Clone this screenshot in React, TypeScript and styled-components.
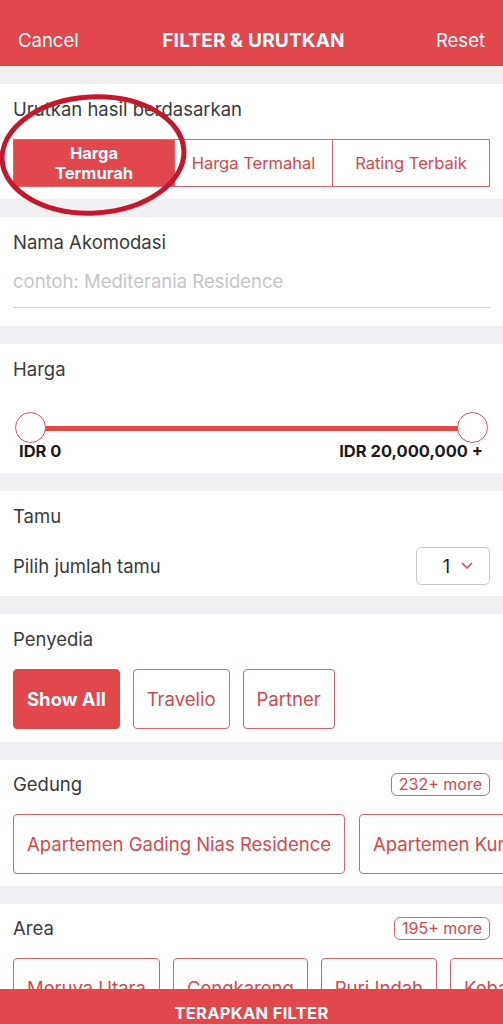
import * as React from "react";
import styled, { createGlobalStyle } from "styled-components";

const colors = {
  primary: "#e1474b",
  chipText: "#d8474c",
  chipBorder: "#d9666a",
  gap: "#f0f0f2",
  text: "#3a3a3c",
  placeholder: "#c5c5c8",
  mark: "#c8172c"
};

const GlobalStyle = createGlobalStyle`
  html, body {
    margin: 0;
    padding: 0;
    background: ${colors.gap};
  }
  * {
    box-sizing: border-box;
  }
  body {
    font-family: Inter, "Liberation Sans", Arial, sans-serif;
    color: ${colors.text};
  }
`;

const PageStyled = styled.div`
  width: 503px;
  height: 1024px;
  overflow: hidden;
  position: relative;
  background: ${colors.gap};
`;

const HeaderStyled = styled.div`
  height: 66px;
  margin-bottom: 1px;
  padding: 14px 18px 0;
  display: flex;
  align-items: center;
  justify-content: space-between;
  background: ${colors.primary};
  color: white;
  font-size: 18.5px;
`;

const HeaderTitle = styled.div`
  font-weight: 700;
  font-size: 19px;
  letter-spacing: 0.2px;
  margin-left: 4px;
`;

const HeaderAction = styled.div<{ right?: boolean }>`
  width: 64px;
  text-align: ${(p) => (p.right ? "right" : "left")};
`;

const Section = styled.div<{ bottom?: number }>`
  position: relative;
  background: white;
  margin-top: 18px;
  padding: 14px 13px ${(p) => p.bottom ?? 12}px;
`;

const Title = styled.div`
  font-size: 18.5px;
  line-height: 22px;
`;

const HeaderRow = styled.div`
  display: flex;
  align-items: center;
  justify-content: space-between;
  height: 24px;
  margin-top: -2px;
`;

const MoreBadge = styled.div`
  border: 1px solid ${colors.chipBorder};
  border-radius: 6px;
  color: ${colors.chipText};
  font-size: 16px;
  line-height: 21px;
  padding: 0 7px;
`;

const Segmented = styled.div`
  display: grid;
  grid-template-columns: 160px 158px 1fr;
  height: 48px;
  margin-top: 19px;
  border: 1px solid ${colors.chipBorder};
`;

const Segment = styled.div<{ active?: boolean; first?: boolean }>`
  display: flex;
  align-items: center;
  justify-content: center;
  text-align: center;
  background: ${(p) => (p.active ? colors.primary : "white")};
  color: ${(p) => (p.active ? "white" : colors.chipText)};
  font-weight: ${(p) => (p.active ? 700 : 400)};
  font-size: 16.5px;
  line-height: 20px;
  border-left: ${(p) => (p.first ? "none" : `1px solid ${colors.chipBorder}`)};
`;

const InputStyled = styled.div`
  margin-top: 14px;
  height: 41px;
  padding-top: 1px;
  line-height: 26px;
  font-size: 18.5px;
  color: ${colors.placeholder};
  border-bottom: 1px solid #d4d4d6;
`;

const SliderStyled = styled.div`
  position: relative;
  margin-top: 32px;
  height: 32px;
  display: flex;
  align-items: center;
`;

const Track = styled.div`
  flex: 1;
  height: 5px;
  margin: 0 17px;
  background: ${colors.primary};
`;

const Thumb = styled.div<{ side: "left" | "right" }>`
  position: absolute;
  top: 0;
  ${(p) => (p.side === "left" ? "left: 2px;" : "right: 2px;")}
  width: 31px;
  height: 31px;
  border-radius: 50%;
  background: white;
  border: 1px solid #cf5a5e;
`;

const SliderLabels = styled.div`
  display: flex;
  justify-content: space-between;
  padding: 0 7px 0 6px;
  margin-top: -2px;
  font-size: 16.5px;
  font-weight: 700;
  line-height: 18px;
  color: #1c1c1e;
`;

const GuestRow = styled.div`
  display: flex;
  align-items: center;
  justify-content: space-between;
  height: 38px;
  margin-top: 20px;
  font-size: 18.5px;
`;

const SelectStyled = styled.div`
  width: 74px;
  height: 38px;
  display: flex;
  align-items: center;
  justify-content: flex-end;
  gap: 11px;
  padding-right: 16px;
  border: 1px solid #c9c9cb;
  border-radius: 5px;
  font-size: 18px;
  color: #1c1c1e;
`;

const ChipRow = styled.div<{ gap?: number; top?: number }>`
  display: flex;
  gap: ${(p) => p.gap ?? 13}px;
  margin-top: ${(p) => p.top ?? 18}px;
  white-space: nowrap;
`;

const Chip = styled.div<{ active?: boolean }>`
  flex: none;
  height: 60px;
  display: flex;
  align-items: center;
  padding: 0 13px;
  border-radius: 4px;
  border: 1px solid ${(p) => (p.active ? colors.primary : colors.chipBorder)};
  background: ${(p) => (p.active ? colors.primary : "white")};
  color: ${(p) => (p.active ? "white" : colors.chipText)};
  font-weight: ${(p) => (p.active ? 700 : 400)};
  font-size: 18.5px;
`;

const ApplyBar = styled.div`
  position: absolute;
  left: 0;
  right: 0;
  top: 989px;
  height: 60px;
  padding-top: 12px;
  background: ${colors.primary};
  color: white;
  text-align: center;
  font-weight: 700;
  font-size: 16.5px;
  line-height: 24px;
  letter-spacing: 0.3px;
`;

const MarkStyled = styled.svg`
  position: absolute;
  left: 0;
  top: 8px;
  pointer-events: none;
`;

const Chevron = () => (
  <svg width="12" height="8" viewBox="0 0 12 8">
    <polyline points="1.5,1.5 6,6 10.5,1.5" fill="none" stroke={colors.primary} strokeWidth="1.6" strokeLinecap="round" strokeLinejoin="round" />
  </svg>
);

const App: React.FC = () => {
  return (
    <PageStyled>
      <GlobalStyle />
      <HeaderStyled>
        <HeaderAction>Cancel</HeaderAction>
        <HeaderTitle>FILTER &amp; URUTKAN</HeaderTitle>
        <HeaderAction right>Reset</HeaderAction>
      </HeaderStyled>

      <Section>
        <Title>Urutkan hasil berdasarkan</Title>
        <Segmented>
          <Segment active first>
            Harga
            <br />
            Termurah
          </Segment>
          <Segment>Harga Termahal</Segment>
          <Segment>Rating Terbaik</Segment>
        </Segmented>
        <MarkStyled width="200" height="140" viewBox="0 0 200 140">
          <ellipse cx="93" cy="63" rx="91" ry="58" fill="none" stroke={colors.mark} strokeWidth="5" transform="rotate(-3 93 63)" />
        </MarkStyled>
      </Section>

      <Section bottom={18}>
        <Title>Nama Akomodasi</Title>
        <InputStyled>contoh: Mediterania Residence</InputStyled>
      </Section>

      <Section bottom={13}>
        <Title>Harga</Title>
        <SliderStyled>
          <Track />
          <Thumb side="left" />
          <Thumb side="right" />
        </SliderStyled>
        <SliderLabels>
          <span>IDR 0</span>
          <span>IDR 20,000,000 +</span>
        </SliderLabels>
      </Section>

      <Section bottom={11}>
        <Title>Tamu</Title>
        <GuestRow>
          <span>Pilih jumlah tamu</span>
          <SelectStyled>
            <span>1</span>
            <Chevron />
          </SelectStyled>
        </GuestRow>
      </Section>

      <Section bottom={13}>
        <Title>Penyedia</Title>
        <ChipRow top={19}>
          <Chip active>Show All</Chip>
          <Chip>Travelio</Chip>
          <Chip>Partner</Chip>
        </ChipRow>
      </Section>

      <Section bottom={12}>
        <HeaderRow>
          <Title>Gedung</Title>
          <MoreBadge>232+ more</MoreBadge>
        </HeaderRow>
        <ChipRow gap={14}>
          <Chip>Apartemen Gading Nias Residence</Chip>
          <Chip>Apartemen Kuningan City</Chip>
        </ChipRow>
      </Section>

      <Section>
        <HeaderRow>
          <Title>Area</Title>
          <MoreBadge>195+ more</MoreBadge>
        </HeaderRow>
        <ChipRow>
          <Chip>Meruya Utara</Chip>
          <Chip>Cengkareng</Chip>
          <Chip>Puri Indah</Chip>
          <Chip>Kebayoran Baru</Chip>
        </ChipRow>
      </Section>

      <ApplyBar>TERAPKAN FILTER</ApplyBar>
    </PageStyled>
  );
};

export default App;
